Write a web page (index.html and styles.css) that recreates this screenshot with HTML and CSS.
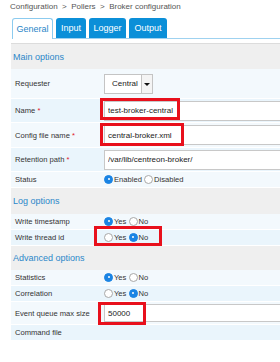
FILE: index.html
```html
<!DOCTYPE html>
<html lang="en">
<head>
  <meta charset="UTF-8" />
  <title>Broker configuration</title>
  <link rel="stylesheet" href="styles.css">
</head>
<body>

  <div class="breadcrumb">Configuration &nbsp;&gt;&nbsp; Pollers &nbsp;&gt;&nbsp; Broker configuration</div>

  <!-- Tabs -->
  <div class="tabs">
    <span class="tab active">General</span>
    <span class="tab">Input</span>
    <span class="tab">Logger</span>
    <span class="tab">Output</span>
  </div>

  <table class="form">
    <tr class="head h-main"><td colspan="2">Main options</td></tr>
    <tr class="r-req odd">
      <td class="lbl">Requester</td>
      <td class="val">
        <span class="select"><span class="sel-text">Central</span><span class="sel-arrow"></span></span>
      </td>
    </tr>
    <tr class="r-name even">
      <td class="lbl">Name <span class="req">*</span></td>
      <td class="val">
        <input type="text" value="test-broker-central">
        <span class="mark mark-name"></span>
      </td>
    </tr>
    <tr class="r-conf odd">
      <td class="lbl">Config file name <span class="req">*</span></td>
      <td class="val">
        <input type="text" value="central-broker.xml">
        <span class="mark mark-conf"></span>
      </td>
    </tr>
    <tr class="r-ret even">
      <td class="lbl">Retention path <span class="req">*</span></td>
      <td class="val"><input type="text" value="/var/lib/centreon-broker/"></td>
    </tr>
    <tr class="r-small odd">
      <td class="lbl">Status</td>
      <td class="val"><span class="radio on"></span>Enabled <span class="radio"></span>Disabled</td>
    </tr>

    <tr class="head h-log"><td colspan="2">Log options</td></tr>
    <tr class="r-small odd">
      <td class="lbl">Write timestamp</td>
      <td class="val"><span class="radio on"></span>Yes <span class="radio"></span>No</td>
    </tr>
    <tr class="r-small even">
      <td class="lbl">Write thread id</td>
      <td class="val">
        <span class="radio"></span>Yes <span class="radio on"></span>No
        <span class="mark mark-thread"></span>
      </td>
    </tr>

    <tr class="head h-adv"><td colspan="2">Advanced options</td></tr>
    <tr class="r-small odd">
      <td class="lbl">Statistics</td>
      <td class="val"><span class="radio on"></span>Yes <span class="radio"></span>No</td>
    </tr>
    <tr class="r-small even">
      <td class="lbl">Correlation</td>
      <td class="val"><span class="radio"></span>Yes <span class="radio on"></span>No</td>
    </tr>
    <tr class="r-queue odd">
      <td class="lbl">Event queue max size</td>
      <td class="val">
        <input type="text" value="50000">
        <span class="mark mark-queue"></span>
      </td>
    </tr>
    <tr class="r-small even">
      <td class="lbl">Command file</td>
      <td class="val"></td>
    </tr>
  </table>

</body>
</html>
```

FILE: styles.css
```css
html, body {
  overflow: hidden;
}
body {
  margin: 0;
  width: 420px;
  font-family: "Liberation Sans", Arial, sans-serif;
  font-size: 8px;
  color: #333;
  background: #fff;
}
.breadcrumb {
  height: 14px;
  line-height: 14px;
  padding-left: 10px;
  color: #555;
  font-size: 8px;
}
.tabs {
  display: flex;
  gap: 3px;
  margin: 4px 0 0 12px;
  border-bottom: 1px solid #9fd2f0;
  height: 20px;
}
.tab {
  display: flex;
  align-items: center;
  justify-content: center;
  height: 20px;
  background: #0b8fd8;
  color: #fff;
  font-size: 9px;
  border-radius: 3px 3px 0 0;
  box-sizing: border-box;
}
.tab:nth-child(1) { width: 41px; }
.tab:nth-child(2) { width: 30px; }
.tab:nth-child(3) { width: 37px; }
.tab:nth-child(4) { width: 38px; }
.tab.active {
  background: #fff;
  color: #2a86c8;
  border: 1px solid #8ccbef;
  border-bottom: none;
  height: 21px;
}
.form {
  margin: 4px 0 0 11px;
  width: 400px;
  border-collapse: collapse;
  border-top: 1px solid #dcdcdc;
}
.form td {
  padding: 0;
  vertical-align: middle;
}
.head td {
  background: #efefef;
  color: #2c87c9;
  font-size: 9px;
  padding-left: 2px;
}
.h-main td { height: 25px; }
.h-log td { height: 26px; border-top: 1px solid #dcdcdc; }
.h-adv td { height: 24px; }
.odd td:not([colspan]) { background: #f3f9fd; }
.even td:not([colspan]) { background: #eaf5fc; }
.lbl {
  width: 89px;
  padding-left: 4px !important;
  border-bottom: 1px solid #fff;
  box-sizing: border-box;
  font-size: 7.6px;
}
.val {
  position: relative;
  padding-left: 4px !important;
  border-bottom: 1px solid #fff;
  font-size: 7.6px;
  color: #333;
  line-height: 10px;
}
.req {
  color: #e0192b;
}
.r-req td { height: 29px; }
.r-name td { height: 23px; }
.r-conf td { height: 24px; }
.r-ret td { height: 23px; }
.r-queue td { height: 22px; }
.r-small td { height: 15px; }
.val input {
  width: 100%;
  height: 20px;
  box-sizing: border-box;
  border: 1px solid #c8c8c8;
  padding: 0 3px;
  font-family: "Liberation Sans", Arial, sans-serif;
  font-size: 8px;
  color: #222;
  background: #fff;
  display: block;
}
.r-queue .val input { height: 18px; }
.select {
  display: inline-flex;
  width: 49px;
  height: 20px;
  border: 1px solid #c4c4c4;
  background: #fff;
  box-sizing: border-box;
  vertical-align: middle;
}
.sel-text {
  flex: 1;
  display: flex;
  align-items: center;
  padding-left: 7px;
  font-size: 8px;
  color: #222;
}
.sel-arrow {
  width: 10px;
  border-left: 1px solid #c4c4c4;
  background: #f4f4f4;
  position: relative;
}
.sel-arrow::after {
  content: "";
  position: absolute;
  left: 2px;
  top: 8px;
  border-left: 3px solid transparent;
  border-right: 3px solid transparent;
  border-top: 3px solid #111;
}
.radio {
  display: inline-block;
  width: 9px;
  height: 9px;
  border-radius: 50%;
  border: 1px solid #a8a8a8;
  background: #fff;
  box-sizing: border-box;
  vertical-align: -2px;
  margin-right: 1px;
  position: relative;
}
.radio.on {
  border-color: #1a84e4;
  background: #1a84e4;
}
.radio.on::after {
  content: "";
  position: absolute;
  left: 2.5px;
  top: 2.5px;
  width: 2px;
  height: 2px;
  border-radius: 50%;
  background: #fff;
}
/* red annotation boxes over the fields */
.mark {
  position: absolute;
  border: 3px solid #e8101c;
  box-sizing: border-box;
}
.mark-name { left: 0; top: -1px; width: 80px; height: 22px; }
.mark-conf { left: 0; top: 0; width: 84px; height: 23px; }
.mark-thread { left: -6px; top: -4px; width: 68px; height: 20px; }
.mark-queue { left: -2px; top: 0; width: 48px; height: 23px; }
```
